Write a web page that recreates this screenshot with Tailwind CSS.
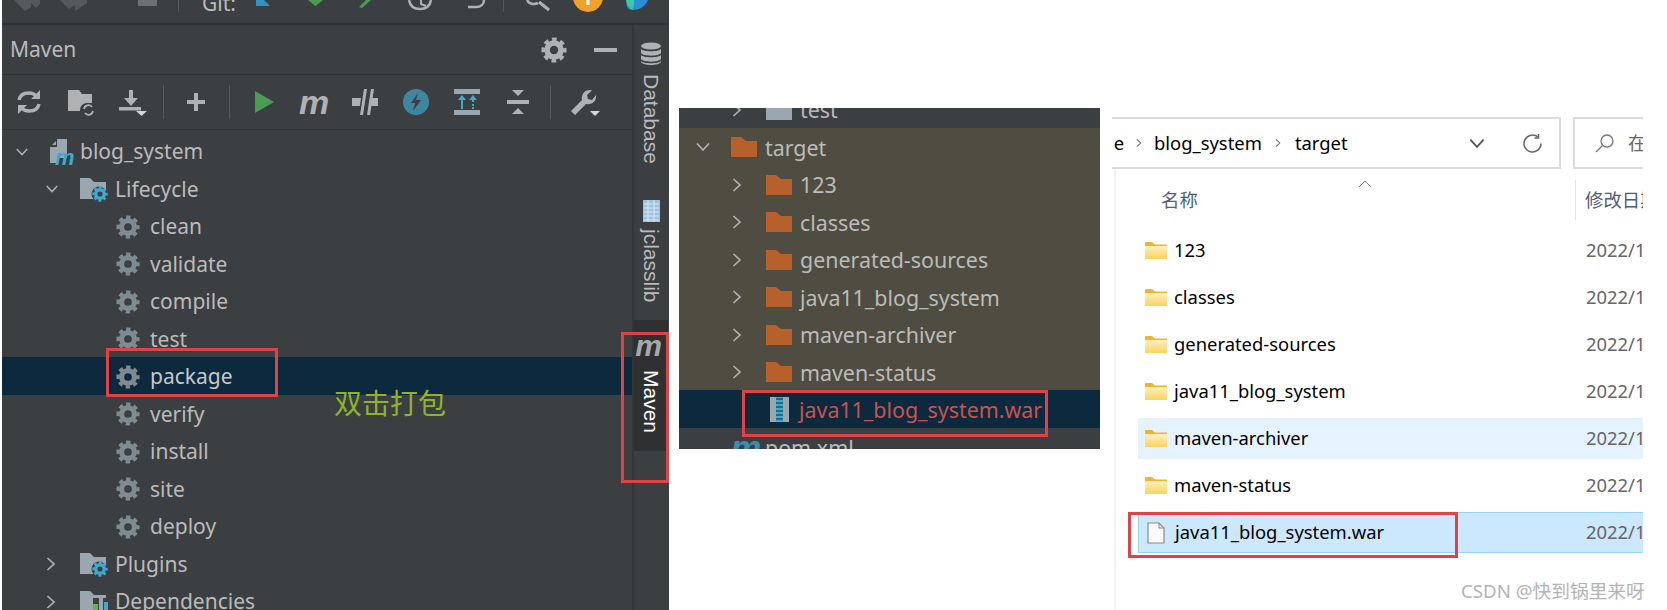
<!DOCTYPE html>
<html lang="en">
<head>
  <meta charset="UTF-8" />
  <title>Maven package</title>
  <script src="https://cdn.jsdelivr.net/npm/@tailwindcss/browser@4"></script>
</head>
<body class="bg-white">
  <svg class="absolute h-0 w-0" width="0" height="0">
    <defs>
      <symbol id="gear" viewBox="0 0 28 28">
        <circle cx="14" cy="14" r="7.500" fill="none" stroke="currentColor" stroke-width="6"/>
        <circle cx="14" cy="14" r="11.500" fill="none" stroke="currentColor" stroke-width="4" stroke-dasharray="5.030 4" stroke-dashoffset="2.500"/>
      </symbol>
      <symbol id="down" viewBox="0 0 16 10"><path d="M2 1.500 8 8l6-6.500" fill="none" stroke="currentColor" stroke-width="1.700"/></symbol>
      <symbol id="right" viewBox="0 0 10 16"><path d="M1.500 2 8 8l-6.500 6" fill="none" stroke="currentColor" stroke-width="1.700"/></symbol>
      <symbol id="orange" viewBox="0 0 26 20"><path d="M0 0h10l5 4h11v16H0z" fill="#b8602c"/></symbol>
      <linearGradient id="yf" x1="0" y1="0" x2="0" y2="1"><stop offset="0" stop-color="#fff0c0"/><stop offset="1" stop-color="#fbd25c"/></linearGradient>
      <symbol id="yellow" viewBox="0 0 22 17"><path d="M0 1q0-1 1-1h6l3 2.500h12V17H0z" fill="#f0b32c"/><rect y="4" width="22" height="13" fill="url(#yf)"/></symbol>
    </defs>
  </svg>

  <div class="relative flex h-[610px] w-[1667px] overflow-hidden bg-white font-['Noto_Sans','Noto_Sans_CJK_SC',sans-serif]">

    <!-- IDE panel -->
    <div class="ml-[2px] flex h-full w-[667px] flex-col bg-[#3c3f41] text-[#bbbbbb]">
      <!-- cut off main toolbar -->
      <div class="flex h-[25px] shrink-0 items-start border-b-2 border-[#323435]">
        <svg class="shrink-0" width="196" height="14" viewBox="2 0 196 14">
          <path d="M14 0l11 11 6-4V0zM28 0l8 8 4-4V0z" fill="#56595b"/>
          <path d="M60 0l9 9 6-4 0 6 12-8V0z" fill="#56595b"/>
          <rect x="138" width="19" height="6" fill="#6d6f71"/>
          <rect x="178" width="1" height="12" fill="#55585a"/>
        </svg>
        <span class="-mt-[9px] ml-[4px] text-[21px] leading-[24px]">Git:</span>
        <svg class="ml-[20px] shrink-0" width="397" height="14" viewBox="258 0 397 14">
          <path d="M258 0h8l6 6h-14z" fill="#3592c4"/>
          <path d="M310 0h15l-7.500 6z" fill="#499c54"/>
          <path d="M361 7l7-7h5l-9 8z" fill="#499c54"/>
          <path d="M411 0c1 6 5 9 11 9s10-3 11-9" fill="none" stroke="#afb1b3" stroke-width="2.500"/>
          <path d="M423 0v4l5 2" fill="none" stroke="#afb1b3" stroke-width="2"/>
          <path d="M470 7h8c5 0 8-3 8-7" fill="none" stroke="#afb1b3" stroke-width="2.500"/>
          <rect x="505" width="1" height="12" fill="#55585a"/>
          <path d="M529 0c2 4 6 5 11 3" fill="none" stroke="#afb1b3" stroke-width="2.500"/>
          <path d="M541 2l10 8" stroke="#afb1b3" stroke-width="3"/>
          <circle cx="590" cy="-3" r="15" fill="#f0a02c"/>
          <rect x="588.500" width="3" height="5" fill="#fff"/>
          <path d="M628 0h22c-3 7-9 10-15 10-3 0-5-1-6-3z" fill="#2a8fd6"/>
          <path d="M628 0h8c0 4 0 7-2 10-3-2-5-5-6-10z" fill="#3fc9a0"/>
        </svg>
      </div>

      <div class="flex min-h-0 flex-1">
        <div class="flex min-w-0 flex-1 flex-col">
          <!-- title -->
          <div class="flex h-[50px] shrink-0 items-center border-b border-[#323232] pr-[15px] pl-[8px]">
            <span class="text-[21px] leading-none">Maven</span>
            <svg class="ml-auto text-[#afb1b3]" width="26" height="26"><use href="#gear"/></svg>
            <span class="ml-[27px] h-[4px] w-[23px] bg-[#afb1b3]"></span>
          </div>

          <!-- maven toolbar -->
          <div class="flex h-[55px] shrink-0 items-center border-b border-[#323232] pl-[12px]">
            <svg class="shrink-0" width="30" height="30" viewBox="0 0 30 30" fill="none" stroke="#afb1b3" stroke-width="3.500">
              <path d="M5 13C6 8 10 6 15 6c3 0 6 1 8 4M25 17c-1 5-5 7-10 7-3 0-6-1-8-4"/>
              <path d="M26 3v9h-9zM4 27v-9h9z" fill="#afb1b3" stroke="none"/>
            </svg>
            <svg class="ml-[22px] shrink-0" width="30" height="30" viewBox="0 0 30 30">
              <path d="M2 3h11l3 4h10v9h-6a7 7 0 0 0-6 8H2z" fill="#afb1b3"/>
              <path d="M18 22a4.500 4.500 0 0 1 8-2M27 24a4.500 4.500 0 0 1-8 2" fill="none" stroke="#afb1b3" stroke-width="1.800"/>
            </svg>
            <svg class="ml-[22px] shrink-0" width="30" height="30" viewBox="0 0 30 30">
              <path d="M11 3h4v8h5l-7 8-7-8h5z" fill="#afb1b3"/>
              <rect x="1" y="20" width="22" height="3.500" fill="#afb1b3"/>
              <path d="M18 24h11l-5.500 5z" fill="#d4d6d8"/>
            </svg>
            <span class="ml-[15px] h-[34px] w-[1px] bg-[#56595b]"></span>
            <svg class="ml-[17px] shrink-0" width="30" height="30" viewBox="0 0 30 30">
              <path d="M13 6h4v7h7v4h-7v7h-4v-7H6v-4h7z" fill="#afb1b3"/>
            </svg>
            <span class="ml-[18px] h-[34px] w-[1px] bg-[#56595b]"></span>
            <svg class="ml-[19px] shrink-0" width="30" height="30" viewBox="0 0 30 30">
              <path d="M6 4l19 11L6 26z" fill="#499c54"/>
            </svg>
            <span class="ml-[20px] w-[30px] shrink-0 text-center font-['Liberation_Sans'] text-[34px] leading-[30px] font-bold text-[#afb1b3] italic">m</span>
            <svg class="ml-[21px] shrink-0" width="30" height="30" viewBox="0 0 30 30">
              <path d="M2 11h9l-1.200 8H2zM20 11h8v8h-9.200z" fill="#afb1b3"/>
              <path d="M14 2h3l-4 26h-3zM21 2h3l-4 26h-3z" fill="#afb1b3"/>
            </svg>
            <svg class="ml-[21px] shrink-0" width="30" height="30" viewBox="0 0 30 30">
              <circle cx="15" cy="15" r="13" fill="#3e86a0"/>
              <path d="M17 6l-7 10h4l-2 8 8-11h-5z" fill="#3c3f41"/>
            </svg>
            <svg class="ml-[21px] shrink-0" width="30" height="30" viewBox="0 0 30 30">
              <rect x="2" y="2" width="26" height="5" fill="#9aa7b0"/>
              <rect x="2" y="23" width="26" height="5" fill="#9aa7b0"/>
              <path d="M10 8l4 5h-3v9H9v-9H6zM21 8l4 5h-3v2h-2v-2h-3zM20 17h2v2h-2zM20 20h2v2h-2z" fill="#3fa9d0"/>
            </svg>
            <svg class="ml-[21px] shrink-0" width="30" height="30" viewBox="0 0 30 30">
              <path d="M9 3h12l-6 6zM4 13h22v4H4zM15 21l6 6H9z" fill="#afb1b3"/>
            </svg>
            <span class="ml-[17px] h-[34px] w-[1px] bg-[#56595b]"></span>
            <svg class="ml-[19px] shrink-0" width="30" height="30" viewBox="0 0 30 30">
              <path d="M1 24l11-11c-1-5 2-10 8-10l2 .5-5 4.500 1 4 4 1 4-5c1 6-4 10-10 9L5 28z" fill="#afb1b3"/>
              <path d="M20 24h10l-5 5z" fill="#d4d6d8"/>
            </svg>
          </div>

          <!-- tree -->
          <div class="min-h-0 flex-1 overflow-hidden pt-[2px] text-[21px] leading-none">
            <div class="flex h-[37.5px] items-center pt-[2px] pl-[13px]">
              <svg class="text-[#afb1b3]" width="14" height="10"><use href="#down"/></svg>
              <svg class="ml-[20px]" width="26" height="28" viewBox="0 0 26 28"><path d="M8 1h10v19H9v5H1V9h7zM7 3 3 7h4z" fill="#9aa7b0"/></svg>
              <span class="relative -ml-[20px] mt-[13px] w-[24px] font-['Liberation_Sans'] text-[22px] font-bold text-[#3fa9d0] italic">m</span>
              <span class="ml-[1px]">blog_system</span>
            </div>
            <div class="flex h-[37.5px] items-center pt-[2px] pl-[43px]">
              <svg class="text-[#afb1b3]" width="14" height="10"><use href="#down"/></svg>
              <svg class="ml-[21px]" width="28" height="26" viewBox="0 0 28 26"><path d="M0 2h10l4 4h12v7H13v10H0z" fill="#9aa7b0"/><circle cx="19" cy="18" r="7.500" fill="#3c3f41"/></svg>
              <svg class="-ml-[16px] mt-[9px] text-[#3fa9d0]" width="16" height="16"><use href="#gear"/></svg>
              <span class="ml-[7px]">Lifecycle</span>
            </div>

            <div class="flex h-[37.5px] items-center pt-[2px] pl-[114px]"><svg class="text-[#7f8b91]" width="24" height="24"><use href="#gear"/></svg><span class="ml-[10px]">clean</span></div>
            <div class="flex h-[37.5px] items-center pt-[2px] pl-[114px]"><svg class="text-[#7f8b91]" width="24" height="24"><use href="#gear"/></svg><span class="ml-[10px]">validate</span></div>
            <div class="flex h-[37.5px] items-center pt-[2px] pl-[114px]"><svg class="text-[#7f8b91]" width="24" height="24"><use href="#gear"/></svg><span class="ml-[10px]">compile</span></div>
            <div class="flex h-[37.5px] items-center pt-[2px] pl-[114px]"><svg class="text-[#7f8b91]" width="24" height="24"><use href="#gear"/></svg><span class="ml-[10px]">test</span></div>
            <div class="flex h-[37.5px] items-center bg-[#0d293e] pt-[2px] pl-[114px] text-[#c8c8c8]"><svg class="text-[#7f8b91]" width="24" height="24"><use href="#gear"/></svg><span class="ml-[10px]">package</span></div>
            <div class="flex h-[37.5px] items-center pt-[2px] pl-[114px]"><svg class="text-[#7f8b91]" width="24" height="24"><use href="#gear"/></svg><span class="ml-[10px]">verify</span></div>
            <div class="flex h-[37.5px] items-center pt-[2px] pl-[114px]"><svg class="text-[#7f8b91]" width="24" height="24"><use href="#gear"/></svg><span class="ml-[10px]">install</span></div>
            <div class="flex h-[37.5px] items-center pt-[2px] pl-[114px]"><svg class="text-[#7f8b91]" width="24" height="24"><use href="#gear"/></svg><span class="ml-[10px]">site</span></div>
            <div class="flex h-[37.5px] items-center pt-[2px] pl-[114px]"><svg class="text-[#7f8b91]" width="24" height="24"><use href="#gear"/></svg><span class="ml-[10px]">deploy</span></div>

            <div class="flex h-[37.5px] items-center pt-[2px] pl-[44px]">
              <svg class="text-[#afb1b3]" width="10" height="16"><use href="#right"/></svg>
              <svg class="ml-[24px]" width="28" height="26" viewBox="0 0 28 26"><path d="M0 2h10l4 4h12v7H13v10H0z" fill="#9aa7b0"/><circle cx="19" cy="18" r="7.500" fill="#3c3f41"/></svg>
              <svg class="-ml-[16px] mt-[9px] text-[#3fa9d0]" width="16" height="16"><use href="#gear"/></svg>
              <span class="ml-[7px]">Plugins</span>
            </div>
            <div class="flex h-[37.5px] items-center pt-[2px] pl-[44px]">
              <svg class="text-[#afb1b3]" width="10" height="16"><use href="#right"/></svg>
              <svg class="ml-[24px]" width="30" height="26" viewBox="0 0 30 26"><path d="M0 2h10l4 4h12v3H13v14H0z" fill="#9aa7b0"/><rect x="13" y="15" width="5" height="11" fill="#62b543"/><rect x="19" y="9" width="4" height="17" fill="#9aa7b0"/><rect x="24" y="13" width="4" height="13" fill="#3fa9d0"/></svg>
              <span class="ml-[5px]">Dependencies</span>
            </div>
          </div>
        </div>

        <!-- tool window stripe -->
        <div class="flex w-[37px] shrink-0 flex-col items-center border-l-2 border-[#333537] pr-[1px] font-['Liberation_Sans'] text-[21px] leading-[36px]">
          <svg class="mt-[17px] shrink-0" width="24" height="24" viewBox="0 0 24 24" fill="#afb1b3">
            <ellipse cx="12" cy="4" rx="10" ry="3.500"/>
            <path d="M2 7c2 3 18 3 20 0v4c-2 3.500-18 3.500-20 0zM2 13c2 3 18 3 20 0v4c-2 3.500-18 3.500-20 0z"/>
            <path d="M2 19c2 3 18 3 20 0v1c-2 4-18 4-20 0z"/>
          </svg>
          <span class="mt-[8px] h-[85px] [writing-mode:vertical-rl]">Database</span>
          <svg class="mt-[41px] shrink-0" width="17" height="22" viewBox="0 0 17 22">
            <rect width="17" height="22" fill="#9cc4e0"/>
            <path d="M1 4h15M1 8h15M1 12h15M1 16h15M1 20h15M5 0v22M11 0v22" stroke="#d9e8f2" stroke-width="1"/>
          </svg>
          <span class="mt-[7px] h-[71px] [writing-mode:vertical-rl]">jclasslib</span>
          <div class="mt-[20px] flex h-[131px] w-full flex-col items-center bg-[#2e3032] text-white">
            <span class="mt-[12px] -ml-[5px] h-[28px] text-[30px] leading-[28px] font-bold text-[#a8a8a8] italic">m</span>
            <span class="mt-[10px] [writing-mode:vertical-rl]">Maven</span>
          </div>
        </div>
      </div>
    </div>

    <!-- project tree crop -->
    <div class="mt-[108px] ml-[10px] h-[341px] w-[421px] shrink-0 overflow-hidden bg-[#3c3f41] text-[21.4px] leading-none text-[#bbbbbb]">
      <div class="-mt-[18px]">
        <div class="flex h-[37.5px] items-center pt-[2px] pl-[53px]">
          <svg class="text-[#afb1b3]" width="10" height="16"><use href="#right"/></svg>
          <span class="ml-[24px] h-[20px] w-[26px] bg-[#9aa7b0]"></span>
          <span class="ml-[8px]">test</span>
        </div>
        <div class="bg-[#4f4d41]">
          <div class="flex h-[37.5px] items-center pt-[2px] pl-[16px]">
            <svg class="text-[#afb1b3]" width="16" height="10"><use href="#down"/></svg>
            <svg class="ml-[20px]" width="26" height="20"><use href="#orange"/></svg>
            <span class="ml-[8px]">target</span>
          </div>
          <div class="flex h-[37.5px] items-center pt-[2px] pl-[53px]">
            <svg class="text-[#afb1b3]" width="10" height="16"><use href="#right"/></svg>
            <svg class="ml-[24px]" width="26" height="20"><use href="#orange"/></svg>
            <span class="ml-[8px]">123</span>
          </div>
          <div class="flex h-[37.5px] items-center pt-[2px] pl-[53px]">
            <svg class="text-[#afb1b3]" width="10" height="16"><use href="#right"/></svg>
            <svg class="ml-[24px]" width="26" height="20"><use href="#orange"/></svg>
            <span class="ml-[8px]">classes</span>
          </div>
          <div class="flex h-[37.5px] items-center pt-[2px] pl-[53px]">
            <svg class="text-[#afb1b3]" width="10" height="16"><use href="#right"/></svg>
            <svg class="ml-[24px]" width="26" height="20"><use href="#orange"/></svg>
            <span class="ml-[8px]">generated-sources</span>
          </div>
          <div class="flex h-[37.5px] items-center pt-[2px] pl-[53px]">
            <svg class="text-[#afb1b3]" width="10" height="16"><use href="#right"/></svg>
            <svg class="ml-[24px]" width="26" height="20"><use href="#orange"/></svg>
            <span class="ml-[8px]">java11_blog_system</span>
          </div>
          <div class="flex h-[37.5px] items-center pt-[2px] pl-[53px]">
            <svg class="text-[#afb1b3]" width="10" height="16"><use href="#right"/></svg>
            <svg class="ml-[24px]" width="26" height="20"><use href="#orange"/></svg>
            <span class="ml-[8px]">maven-archiver</span>
          </div>
          <div class="flex h-[37.5px] items-center pt-[2px] pl-[53px]">
            <svg class="text-[#afb1b3]" width="10" height="16"><use href="#right"/></svg>
            <svg class="ml-[24px]" width="26" height="20"><use href="#orange"/></svg>
            <span class="ml-[8px]">maven-status</span>
          </div>
        </div>
        <div class="flex h-[37.5px] items-center bg-[#0d293e] pt-[2px] pl-[91px] text-[#c75450]">
          <svg width="19" height="25" viewBox="0 0 19 25">
            <rect width="19" height="25" fill="#9aa7b0"/>
            <rect x="6" width="7" height="25" fill="#3fa9d0"/>
            <path d="M6 2h7M6 6h7M6 10h7M6 14h7M6 18h7M6 22h7" stroke="#0d293e" stroke-width="1"/>
          </svg>
          <span class="ml-[10px]">java11_blog_system.war</span>
        </div>
        <div class="flex h-[37.5px] items-center pt-[2px] pl-[52px]">
          <span class="w-[28px] font-['Liberation_Sans'] text-[34px] font-bold text-[#3a8fb0] italic">m</span>
          <span class="ml-[6px]">pom.xml</span>
        </div>
      </div>
    </div>

    <!-- explorer crop -->
    <div class="ml-[12px] w-[531px] shrink-0 overflow-hidden pt-[117px] text-[18.4px] leading-none text-black">
      <div class="flex h-[52px] gap-[12px]">
        <div class="flex w-[449px] items-center border-y-2 border-r-2 border-[#dcdcdc]">
          <span class="w-[12px] overflow-hidden text-right">e</span>
          <svg class="ml-[12px] text-[#666]" width="6" height="10"><use href="#right"/></svg>
          <span class="ml-[12px]">blog_system</span>
          <svg class="ml-[13px] text-[#666]" width="6" height="10"><use href="#right"/></svg>
          <span class="ml-[14px]">target</span>
          <svg class="ml-auto text-[#555]" width="18" height="11"><use href="#down"/></svg>
          <svg class="mr-[16px] ml-[36px]" width="21" height="21" viewBox="0 0 21 21" fill="none" stroke="#666" stroke-width="1.500"><path d="M19 10.500a8.500 8.500 0 1 1-3-6.500"/><path d="M16.500 1v4h-4" /></svg>
        </div>
        <div class="flex flex-1 items-center overflow-hidden border-y-2 border-l-2 border-[#dcdcdc] pl-[20px] text-[#666]">
          <svg class="shrink-0" width="20" height="20" viewBox="0 0 20 20" fill="none" stroke="#777" stroke-width="1.300"><circle cx="12" cy="8" r="6"/><path d="M7.500 12.500 1 19"/></svg>
          <span class="ml-[13px] shrink-0">在</span>
        </div>
      </div>

      <div class="ml-[2px] h-[441px] border-l-2 border-[#f3f3f3] pt-[11px]">
        <div class="flex h-[40px] items-center overflow-hidden pl-[45px] text-[#4c607a]">
          <span class="w-[36px] shrink-0 whitespace-nowrap">名称</span>
          <svg class="-mt-[32px] ml-[161px] shrink-0" width="14" height="8" viewBox="0 0 14 8" fill="none" stroke="#888" stroke-width="1"><path d="M1 7l6-6 6 6"/></svg>
          <span class="ml-[203px] h-[40px] w-[1px] shrink-0 bg-[#e5e5e5]"></span>
          <span class="ml-[9px] shrink-0 whitespace-nowrap">修改日期</span>
        </div>
        <div class="mt-[10px] ml-[22px] flex w-[505px] flex-col gap-[6px]">
          <div class="flex h-[41px] items-center pl-[7px]"><svg width="22" height="17"><use href="#yellow"/></svg><span class="ml-[7px]">123</span><span class="ml-auto w-[57px] overflow-hidden whitespace-nowrap text-[#666]">2022/11</span></div>
          <div class="flex h-[41px] items-center pl-[7px]"><svg width="22" height="17"><use href="#yellow"/></svg><span class="ml-[7px]">classes</span><span class="ml-auto w-[57px] overflow-hidden whitespace-nowrap text-[#666]">2022/11</span></div>
          <div class="flex h-[41px] items-center pl-[7px]"><svg width="22" height="17"><use href="#yellow"/></svg><span class="ml-[7px]">generated-sources</span><span class="ml-auto w-[57px] overflow-hidden whitespace-nowrap text-[#666]">2022/11</span></div>
          <div class="flex h-[41px] items-center pl-[7px]"><svg width="22" height="17"><use href="#yellow"/></svg><span class="ml-[7px]">java11_blog_system</span><span class="ml-auto w-[57px] overflow-hidden whitespace-nowrap text-[#666]">2022/11</span></div>
          <div class="flex h-[41px] items-center bg-[#e5f3ff] pl-[7px]"><svg width="22" height="17"><use href="#yellow"/></svg><span class="ml-[7px]">maven-archiver</span><span class="ml-auto w-[57px] overflow-hidden whitespace-nowrap text-[#666]">2022/11</span></div>
          <div class="flex h-[41px] items-center pl-[7px]"><svg width="22" height="17"><use href="#yellow"/></svg><span class="ml-[7px]">maven-status</span><span class="ml-auto w-[57px] overflow-hidden whitespace-nowrap text-[#666]">2022/11</span></div>
          <div class="flex h-[41px] items-center border border-r-0 border-[#99d1ff] bg-[#cce8ff] pl-[8px]">
            <svg width="18" height="22" viewBox="0 0 18 22"><path d="M1 1h11l5 5v15H1z" fill="#fafafa" stroke="#8a8a8a" stroke-width="1.200"/><path d="M12 1v5h5" fill="none" stroke="#8a8a8a" stroke-width="1"/></svg>
            <span class="ml-[10px]">java11_blog_system.war</span><span class="ml-auto w-[57px] overflow-hidden whitespace-nowrap text-[#666]">2022/11</span>
          </div>
        </div>
      </div>
    </div>

    <!-- annotations over the screenshots -->
    <div class="absolute top-[348px] left-[106px] h-[49px] w-[172px] border-[3px] border-[#e04345]"></div>
    <div class="absolute top-[332px] left-[621px] h-[151px] w-[48px] border-[3px] border-[#e04345]"></div>
    <div class="absolute top-[390px] left-[742px] h-[47px] w-[306px] border-[3px] border-[#e04345]"></div>
    <div class="absolute top-[512px] left-[1128px] h-[46px] w-[330px] border-[3px] border-[#e04345]"></div>
    <span class="absolute top-[383px] left-[334px] font-['Noto_Sans_CJK_SC'] text-[28px] leading-[38px] text-[#8fb32a]">双击打包</span>
    <span class="absolute top-[579px] left-[1461px] text-[18.700px] leading-[24px] text-[#b4b4b4]">CSDN @快到锅里来呀</span>
  </div>
</body>
</html>
